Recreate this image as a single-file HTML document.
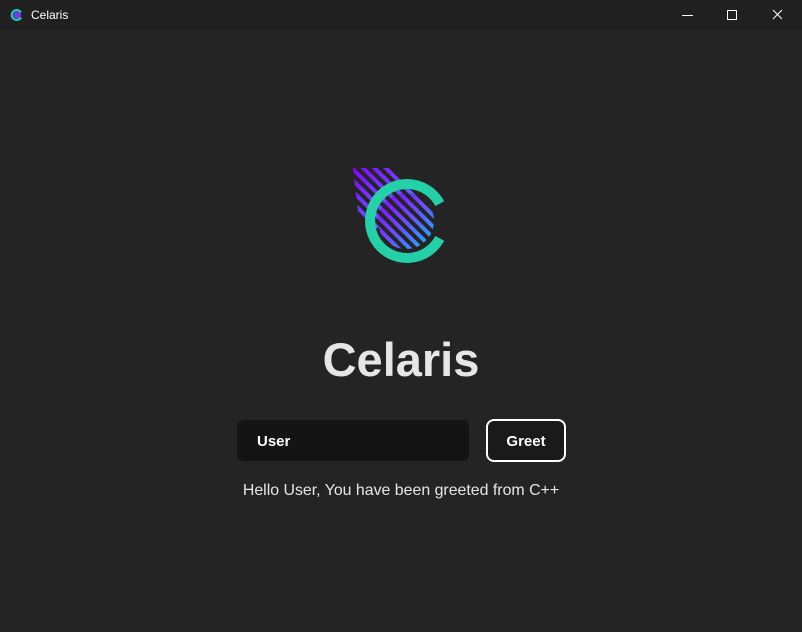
<!DOCTYPE html>
<html><head><style>
body{margin:0;width:802px;height:632px;background:#242424;font-family:"Liberation Sans",sans-serif;overflow:hidden;position:relative}
.tb{position:absolute;left:0;top:0;width:802px;height:30px;background:#202020}
.tt{position:absolute;left:31px;top:8px;font-size:12px;color:#fff}
h1{position:absolute;left:0;width:802px;top:332px;margin:0;text-align:center;font-size:47px;font-weight:bold;color:#e6e6e6}
.in{position:absolute;left:237px;top:420px;width:232px;height:41px;background:#141414;border-radius:6px;color:#fff;font-weight:bold;font-size:15px;line-height:43px;box-sizing:border-box;padding-left:20px}
.bt{position:absolute;left:486px;top:419px;width:80px;height:43px;box-sizing:border-box;border:2px solid #fff;border-radius:8px;background:#1a1a1a;color:#fff;font-weight:bold;font-size:15px;line-height:42px;text-align:center}
.msg{position:absolute;left:0;width:802px;top:482px;text-align:center;color:#e6e6e6;font-size:15.9px}
</style></head><body>
<div class="tb">
<svg style="position:absolute;left:10px;top:8px" width="14" height="14" viewBox="0 0 14 14"><circle cx="7" cy="7" r="4" fill="#6a3ee0"/><path d="M11 4.5A5 5 0 1 0 11 9.5" fill="none" stroke="#24d0a8" stroke-width="2"/></svg>
<div class="tt">Celaris</div>
<svg style="position:absolute;left:660px;top:0" width="142" height="30"><path d="M22 15.5h11" stroke="#fff" stroke-width="1"/><rect x="67.5" y="10.5" width="9" height="9" fill="none" stroke="#fff"/><path d="M113 10l9 9M122 10l-9 9" stroke="#fff" stroke-width="1"/></svg>
</div>
<svg style="position:absolute;left:0;top:0" width="802" height="632">
<defs>
<linearGradient id="g" x1="0" y1="0" x2="1" y2="1"><stop offset="0" stop-color="#8a00ff"/><stop offset="0.5" stop-color="#6a4cff"/><stop offset="1" stop-color="#10c0ff"/></linearGradient>
<pattern id="p" patternUnits="userSpaceOnUse" width="8" height="8" patternTransform="rotate(-45)"><rect width="4" height="8" fill="#fff"/></pattern>
<mask id="m"><rect width="802" height="632" fill="url(#p)"/></mask>
</defs>
<g mask="url(#m)">
<path d="M353 168 L392 168 L420 196 L372 232 L358 212 Z" fill="url(#g)"/>
<circle cx="406" cy="221" r="28" fill="url(#g)"/>
</g>
<path d="M439.7 203.6 A37 37 0 1 0 439.7 238.4" fill="none" stroke="#24d0a8" stroke-width="10"/>
</svg>
<h1>Celaris</h1>
<div class="in">User</div>
<div class="bt">Greet</div>
<div class="msg">Hello User, You have been greeted from C++</div>
</body></html>
